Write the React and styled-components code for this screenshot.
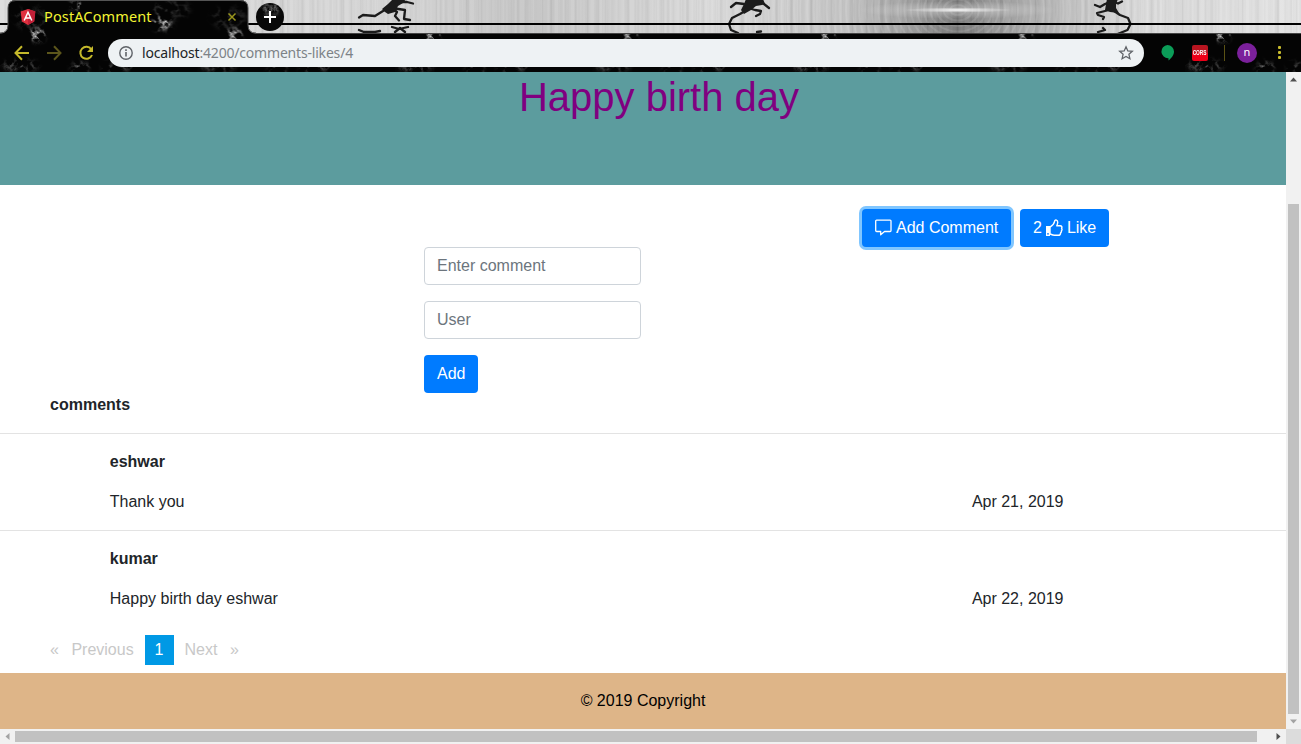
import React from "react";
import styled, { createGlobalStyle } from "styled-components";

const Global = createGlobalStyle`
  * { box-sizing: border-box; }
  html, body { margin: 0; overflow: hidden; }
  body { font: 16px/24px "Liberation Sans", Arial, sans-serif; color: #212529; background: #fff; }
  p, h1 { margin: 0; font-weight: 400; }
  svg { display: block; flex: none; }
`;

const Window = styled.div`
  width: 1301px;
  height: 744px;
  display: flex;
  flex-direction: column;
  overflow: hidden;
`;
const Chrome = styled.header`
  height: 72px;
  position: relative;
  background: #040404;
  overflow: hidden;
`;
const ThemeArt = styled.svg`
  position: absolute;
  left: 0;
  top: 0;
`;
const TabStrip = styled.div`
  position: relative;
  height: 34px;
  display: flex;
  padding-left: 8px;
`;
const Tab = styled.div`
  width: 240px;
  display: flex;
  align-items: center;
  padding: 0 11px 0 12px;
`;
const TabTitle = styled.span`
  flex: 1;
  margin: -2px 0 0 8px;
  font: 14.5px/20px "Noto Sans", "Open Sans", sans-serif;
  letter-spacing: 0.13px;
  color: #f4f433;
  white-space: nowrap;
`;
const NewTab = styled.div`
  width: 28px;
  height: 28px;
  margin: 3px 0 0 8px;
  display: grid;
  place-items: center;
`;
const Toolbar = styled.div`
  position: relative;
  height: 38px;
  display: flex;
  align-items: center;
  padding: 0 14px 1px 14px;
`;
const NavIcons = styled.div`
  display: flex;
  gap: 16px;
  width: 94px;
`;
const AddressBar = styled.div`
  width: 1036px;
  height: 28px;
  border-radius: 14px;
  background: #eef2f4;
  display: flex;
  align-items: center;
  padding: 0 10px;
`;
const Url = styled.span`
  flex: 1;
  margin-left: 8px;
  font: 14px/20px "Noto Sans", "Open Sans", sans-serif;
  letter-spacing: -0.19px;
  color: #7d8387;
  b { font-weight: 400; color: #202426; }
`;
const Extensions = styled.div`
  display: flex;
  align-items: center;
  margin-left: 16px;
`;
const Cors = styled.div`
  width: 16px;
  height: 16px;
  margin-left: 17px;
  border-radius: 2px;
  background: linear-gradient(#b81520 45%, #ed0018 55%);
  color: #fff;
  font: bold 8px/16px "Liberation Sans", sans-serif;
  display: flex;
  justify-content: center;
  span { transform: scaleX(0.6); }
`;
const Divider = styled.div`
  width: 1px;
  height: 16px;
  margin: 0 12px 0 16px;
  background: #5b5215;
`;
const Avatar = styled.div`
  width: 20px;
  height: 20px;
  border-radius: 50%;
  background: #7b209b;
  color: #fff;
  font: 11px/18px "Noto Sans", sans-serif;
  text-align: center;
`;
const MenuDots = styled.div`
  margin-left: 21px;
  display: grid;
  gap: 2px;
  i { width: 3px; height: 3px; border-radius: 1px; background: #c9bd2c; }
`;

const Viewport = styled.div`
  display: grid;
  grid-template-columns: 1286px 15px;
  grid-template-rows: 657px 15px;
`;
const Page = styled.main`
  overflow: hidden;
`;
const Banner = styled.div`
  height: 113px;
  padding: 1px 0 0 32px;
  background: #5c9c9e;
  text-align: center;
`;
const Heading = styled.h1`
  font-size: 40px;
  line-height: 48px;
  color: purple;
`;
const Actions = styled.div`
  display: flex;
  justify-content: flex-end;
  gap: 9px;
  padding: 24px 177px 0 0;
`;
const Button = styled.button`
  height: 38px;
  display: inline-flex;
  align-items: center;
  gap: 4px;
  padding: 0 13px;
  border: 0;
  border-radius: 4px;
  background: #007bff;
  color: #fff;
  font: 16px/24px "Liberation Sans", Arial, sans-serif;
  white-space: nowrap;
  width: ${(p) => p.$width};
  box-shadow: ${(p) => (p.$focused ? "0 0 0 3px #80c6ff" : "none")};
`;
const Form = styled.form`
  display: flex;
  flex-direction: column;
  align-items: flex-start;
  gap: 16px;
  padding-left: 424px;
`;
const Field = styled.input`
  width: 217px;
  height: 38px;
  padding: 6px 12px;
  border: 1px solid #ced4da;
  border-radius: 4px;
  font: 16px/24px "Liberation Sans", Arial, sans-serif;
  background: #fff;
  &::placeholder { color: #6c757d; opacity: 1; }
`;
const SectionTitle = styled.div`
  height: 40px;
  padding-left: 50px;
  font-weight: 700;
`;
const Comment = styled.article`
  height: 97px;
  padding: 16px 222.5px 0 109.8px;
  border-top: 1px solid #e3e3e3;
`;
const Author = styled.div`
  font-weight: 700;
  margin-bottom: 16px;
`;
const CommentLine = styled.div`
  display: flex;
  justify-content: space-between;
`;
const Pagination = styled.nav`
  height: 46px;
  padding: 8px 0 0 50px;
  display: flex;
  color: #c8c8c8;
  line-height: 30px;
`;
const PageStep = styled.span`
  display: flex;
  gap: 12.5px;
  width: ${(p) => p.$width};
  margin-left: ${(p) => p.$left || 0};
`;
const CurrentPage = styled.span`
  width: 29px;
  height: 30px;
  background: #0099e5;
  color: #fff;
  text-align: center;
  padding-right: 1px;
`;
const Footer = styled.footer`
  height: 56px;
  background: #deb588;
  color: #000;
  text-align: center;
  line-height: 56px;
`;
const ScrollTrack = styled.div`
  display: flex;
  flex-direction: ${(p) => (p.$vertical ? "column" : "row")};
  align-items: center;
  justify-content: space-between;
  background: #f1f1f1;
`;
const ArrowCell = styled.div`
  width: 15px;
  height: 15px;
  display: grid;
  place-items: center;
`;
const VerticalThumb = styled.div`
  width: 11px;
  height: 510px;
  margin-top: 117px;
  background: #c1c1c1;
`;
const HorizontalThumb = styled.div`
  width: 1242px;
  height: 11px;
  margin-right: 14px;
  background: #c1c1c1;
`;
const Corner = styled.div`
  background: #dcdcdc;
`;

const Arrow = ({ turn, color }) => (
  <ArrowCell>
    <svg width="7" height="7" viewBox="0 0 7 7">
      <path d="M0 5.5 3.5 1.500 7 5.500z" fill={color} transform={`rotate(${turn} 3.5 3.5)`} />
    </svg>
  </ArrowCell>
);

const runners = [
  {
    limbs: ["M359 17.500l4-2.500 12 1 8-5 8-6", "M400 2l7 0 6 1.500", "M392 8l5 4-2 4 4 4.500", "M392 8l13 2-1 9 6 1"],
    body: "M382 9l6-5 5-5h13l-3 4-5 3-3 6-7 2-3-2z",
  },
  {
    limbs: ["M750 8l-10 6-8 4-3 6 2 6 7 3", "M731 7l5-4 8 1", "M748 8l7 2 6 1-1 3-4 2", "M760 1l4 3 5 4"],
    body: "M741 10l3-6 2-5h17l2 5-3 1-6 1-5 4-7 4z",
  },
  {
    limbs: ["M1111 9l9 6 8 3 2.500 6-3 6-10 4", "M1109 10l-12 3 1 2 6 2-1 2", "M1095 5l5 2 5-3 5-2", "M1112 1.500l6 2 4-2"],
    body: "M1105 10l1-6 1-5h11l-2 5 0 4 3 5-9-1z",
  },
];

const Runner = ({ limbs, body }) => (
  <>
    {limbs.map((d) => <path key={d} d={d} />)}
    <path d={body} fill="#1b1b1b" stroke="none" />
  </>
);

const Theme = () => (
  <ThemeArt width="1301" height="72" viewBox="0 0 1301 72">
    <defs>
      <linearGradient id="metal" x2="1">
        <stop offset="0" stopColor="#d6d6d6" /><stop offset=".3" stopColor="#cfcfcf" />
        <stop offset=".4" stopColor="#bdbdbd" /><stop offset=".55" stopColor="#d4d4d4" />
        <stop offset=".65" stopColor="#b8b8b8" /><stop offset=".7" stopColor="#8c8c8c" />
        <stop offset=".735" stopColor="#606060" /><stop offset=".77" stopColor="#8a8a8a" />
        <stop offset=".82" stopColor="#b4b4b4" /><stop offset=".87" stopColor="#d2d2d2" />
        <stop offset="1" stopColor="#dfdfdf" />
      </linearGradient>
      <radialGradient id="beam"><stop stopColor="#fff" /><stop offset=".3" stopColor="#fff" stopOpacity=".55" /><stop offset="1" stopColor="#fff" stopOpacity="0" /></radialGradient>
      <filter id="grain" x="0" y="0" width="100%" height="100%">
        <feTurbulence type="fractalNoise" baseFrequency=".2 .001" numOctaves="3" seed="5" />
        <feColorMatrix values="1.6 0 0 0 0 1.6 0 0 0 0 1.6 0 0 0 0 0 0 0 0 .2" />
      </filter>
      <filter id="smoke" filterUnits="userSpaceOnUse" x="0" y="0" width="300" height="72" colorInterpolationFilters="sRGB">
        <feGaussianBlur in="SourceGraphic" stdDeviation="2.6" result="blob" />
        <feTurbulence type="turbulence" baseFrequency=".09" numOctaves="5" seed="12" />
        <feColorMatrix values="0 0 0 0 .85 0 0 0 0 .85 0 0 0 0 .85 -3.400 0 0 0 1.200" />
        <feComposite in2="blob" operator="in" />
      </filter>
      <pattern id="clouds" width="197.5" height="72" patternUnits="userSpaceOnUse">
        <rect width="197.5" height="72" fill="#040404" />
        <g filter="url(#smoke)" fill="#fff">
          <ellipse cx="37" cy="35" rx="8" ry="6" />
          <ellipse cx="162" cy="23" rx="10" ry="7" />
          <ellipse cx="77" cy="5" rx="7" ry="5" opacity=".7" />
          <ellipse cx="80" cy="68" rx="9" ry="6" opacity=".55" />
          <ellipse cx="170" cy="9" rx="20" ry="10" opacity=".18" />
          <ellipse cx="20" cy="66" rx="18" ry="6" opacity=".35" />
          <ellipse cx="118" cy="67" rx="16" ry="5" opacity=".35" />
          <ellipse cx="32" cy="18" rx="18" ry="12" opacity=".15" />
        </g>
      </pattern>
      <clipPath id="strip"><rect width="1301" height="33" /></clipPath>
    </defs>
    <rect width="1301" height="72" fill="url(#clouds)" />
    <g clipPath="url(#strip)">
      <rect width="1301" height="33" fill="url(#metal)" />
      <rect width="1301" height="33" filter="url(#grain)" />
      <g fill="none" stroke="#fff" strokeOpacity=".1" strokeWidth="2">
        {Array.from({ length: 32 }, (_, i) => <ellipse key={i} cx="958" cy="10" rx={8 + i * 6.5} ry={5 + i * 5.5} />)}
      </g>
      <ellipse cx="958" cy="10" rx="100" ry="9" fill="url(#beam)" opacity=".5" />
      <ellipse cx="958" cy="10" rx="55" ry="2.6" fill="url(#beam)" />
      <g fill="none" stroke="#1b1b1b" strokeWidth="2.3" strokeLinejoin="round" strokeLinecap="round">
        {runners.map((r) => <Runner key={r.body} {...r} />)}
        <path d="M359 30l5 2h11l5-1M392 27l7 2 9-2M395 32l5-4 5 4M757 32l4-.5M1098 32l7-2-2-2" />
      </g>
      <path d="M0 24h1301" stroke="#000" strokeWidth="2" />
    </g>
    <path d="M0 33.5h1301" stroke="#444" />
    <path d="M0 34q8-1 8-9V8q0-8 8-8h224q8 0 8 8v17q0 8 8 9z" fill="url(#clouds)" />
    <path d="M0 33q8 0 8-8V8q0-7.500 8-7.500h224q8 0 8 7.500v17q0 8 8 8" fill="none" stroke="#555" />
    <circle cx="270" cy="17" r="14" fill="#080808" />
    <ellipse cx="270" cy="9" rx="10" ry="6" fill="#fff" opacity=".5" filter="url(#smoke)" />
  </ThemeArt>
);

const BrowserChrome = () => (
  <Chrome>
    <Theme />
    <TabStrip>
      <Tab>
        <svg width="16" height="18" viewBox="0 0 16 18">
          <path d="M8 1l7.3 2.6-1.1 10L8 17l-6.2-3.4L.7 3.6z" fill="#e0303f" />
          <path d="M8 1l7.3 2.6-1.1 10L8 17z" fill="#c32038" />
          <path d="M4.200 12.500L8 4.200l3.800 8.300M5.700 10h4.600" fill="none" stroke="#fff" strokeWidth="1.5" />
        </svg>
        <TabTitle>PostAComment</TabTitle>
        <svg width="10" height="10" viewBox="0 0 10 10"><path d="M1.5 1.5l7 7m0-7l-7 7" stroke="#9a961e" strokeWidth="1.5" /></svg>
      </Tab>
      <NewTab>
        <svg width="12" height="12" viewBox="0 0 12 12"><path d="M6 0v12M0 6h12" stroke="#fff" strokeWidth="2" /></svg>
      </NewTab>
    </TabStrip>
    <Toolbar>
      <NavIcons>
        <svg width="16" height="16" viewBox="0 0 16 16" fill="none" stroke="#c5b92b" strokeWidth="2"><path d="M15 8H2M8 1.3L1.5 8 8 14.7" /></svg>
        <svg width="16" height="16" viewBox="0 0 16 16" fill="none" stroke="#5c561b" strokeWidth="2"><path d="M1 8h13M8 1.3L14.5 8 8 14.7" /></svg>
        <svg width="16" height="16" viewBox="0 0 16 16"><path d="M13.3 4.3A6 6 0 1 0 14 10" fill="none" stroke="#c5b92b" strokeWidth="2" /><path d="M15 1v6H9z" fill="#c5b92b" /></svg>
      </NavIcons>
      <AddressBar>
        <svg width="16" height="16" viewBox="0 0 16 16"><circle cx="8" cy="8" r="6.2" fill="none" stroke="#5f6368" strokeWidth="1.4" /><path d="M8 7v4.5M8 4.3v1.6" stroke="#5f6368" strokeWidth="1.6" /></svg>
        <Url><b>localhost</b>:4200/comments-likes/4</Url>
        <svg width="16" height="16" viewBox="0 0 16 16"><path d="M8 1.8l1.8 4.1 4.5.4-3.4 3 1 4.4L8 11.4l-3.9 2.3 1-4.4-3.4-3 4.5-.4z" fill="none" stroke="#5f6368" strokeWidth="1.3" /></svg>
      </AddressBar>
      <Extensions>
        <svg width="15" height="18" viewBox="0 0 15 18"><path d="M7.5 1A6.5 6.5 0 0 1 14 7.5c0 4-3 7-5.500 9v-2.300A6.600 6.600 0 1 1 7.5 1z" fill="#0b9d58" /></svg>
        <Cors><span>CORS</span></Cors>
        <Divider />
        <Avatar>n</Avatar>
        <MenuDots><i /><i /><i /></MenuDots>
      </Extensions>
    </Toolbar>
  </Chrome>
);

const comments = [
  { author: "eshwar", text: "Thank you", date: "Apr 21, 2019" },
  { author: "kumar", text: "Happy birth day eshwar", date: "Apr 22, 2019" },
];

export default function App() {
  return (
    <Window>
      <Global />
      <BrowserChrome />
      <Viewport>
        <Page>
          <Banner><Heading>Happy birth day</Heading></Banner>
          <Actions>
            <Button $focused $width="149px">
              <svg width="17" height="18" viewBox="0 0 17 18"><path d="M1.600 1.100h13.500a.9.9 0 0 1 .9.9v9.600a.9.9 0 0 1-.9.9H9.500L5.700 15.800v-3.300H1.600a.9.9 0 0 1-.9-.9V2a.9.9 0 0 1 .9-.9z" fill="none" stroke="#fff" strokeWidth="1.3" strokeLinejoin="round" /></svg>
              Add Comment
            </Button>
            <Button $width="89px">
              2
              <svg width="17" height="18" viewBox="1 0 17 18"><path d="M1 7h4v10H1z" fill="#fff" /><path d="M5 8.200c3.200-2 4.200-3.400 4.700-6.200.4-1.700 3.200-1 3 1.500-.1 1.200-.5 2.300-.9 3.300h3.400c1.500 0 2.100 1.300 1.400 2.500.6.900.4 1.800-.2 2.400.2 1-.1 1.700-.8 2.200 0 1.600-.8 2.400-2.300 2.400H9.500c-1.700 0-2.900-.7-4.500-1.400z" fill="none" stroke="#fff" strokeWidth="1.4" strokeLinejoin="round" /><circle cx="3" cy="14.800" r=".9" fill="#007bff" /></svg>
              Like
            </Button>
          </Actions>
          <Form>
            <Field placeholder="Enter comment" />
            <Field placeholder="User" />
            <Button type="button" $width="54px">Add</Button>
          </Form>
          <SectionTitle>comments</SectionTitle>
          {comments.map((c) => (
            <Comment key={c.author}>
              <Author>{c.author}</Author>
              <CommentLine><span>{c.text}</span><span>{c.date}</span></CommentLine>
            </Comment>
          ))}
          <Pagination>
            <PageStep $width="95px"><span>«</span><span>Previous</span></PageStep>
            <CurrentPage>1</CurrentPage>
            <PageStep $left="10.5px"><span>Next</span><span>»</span></PageStep>
          </Pagination>
          <Footer>© 2019 Copyright</Footer>
        </Page>
        <ScrollTrack $vertical>
          <Arrow turn={0} color="#505050" />
          <VerticalThumb />
          <Arrow turn={180} color="#a3a3a3" />
        </ScrollTrack>
        <ScrollTrack>
          <Arrow turn={270} color="#a3a3a3" />
          <HorizontalThumb />
          <Arrow turn={90} color="#505050" />
        </ScrollTrack>
        <Corner />
      </Viewport>
    </Window>
  );
}
